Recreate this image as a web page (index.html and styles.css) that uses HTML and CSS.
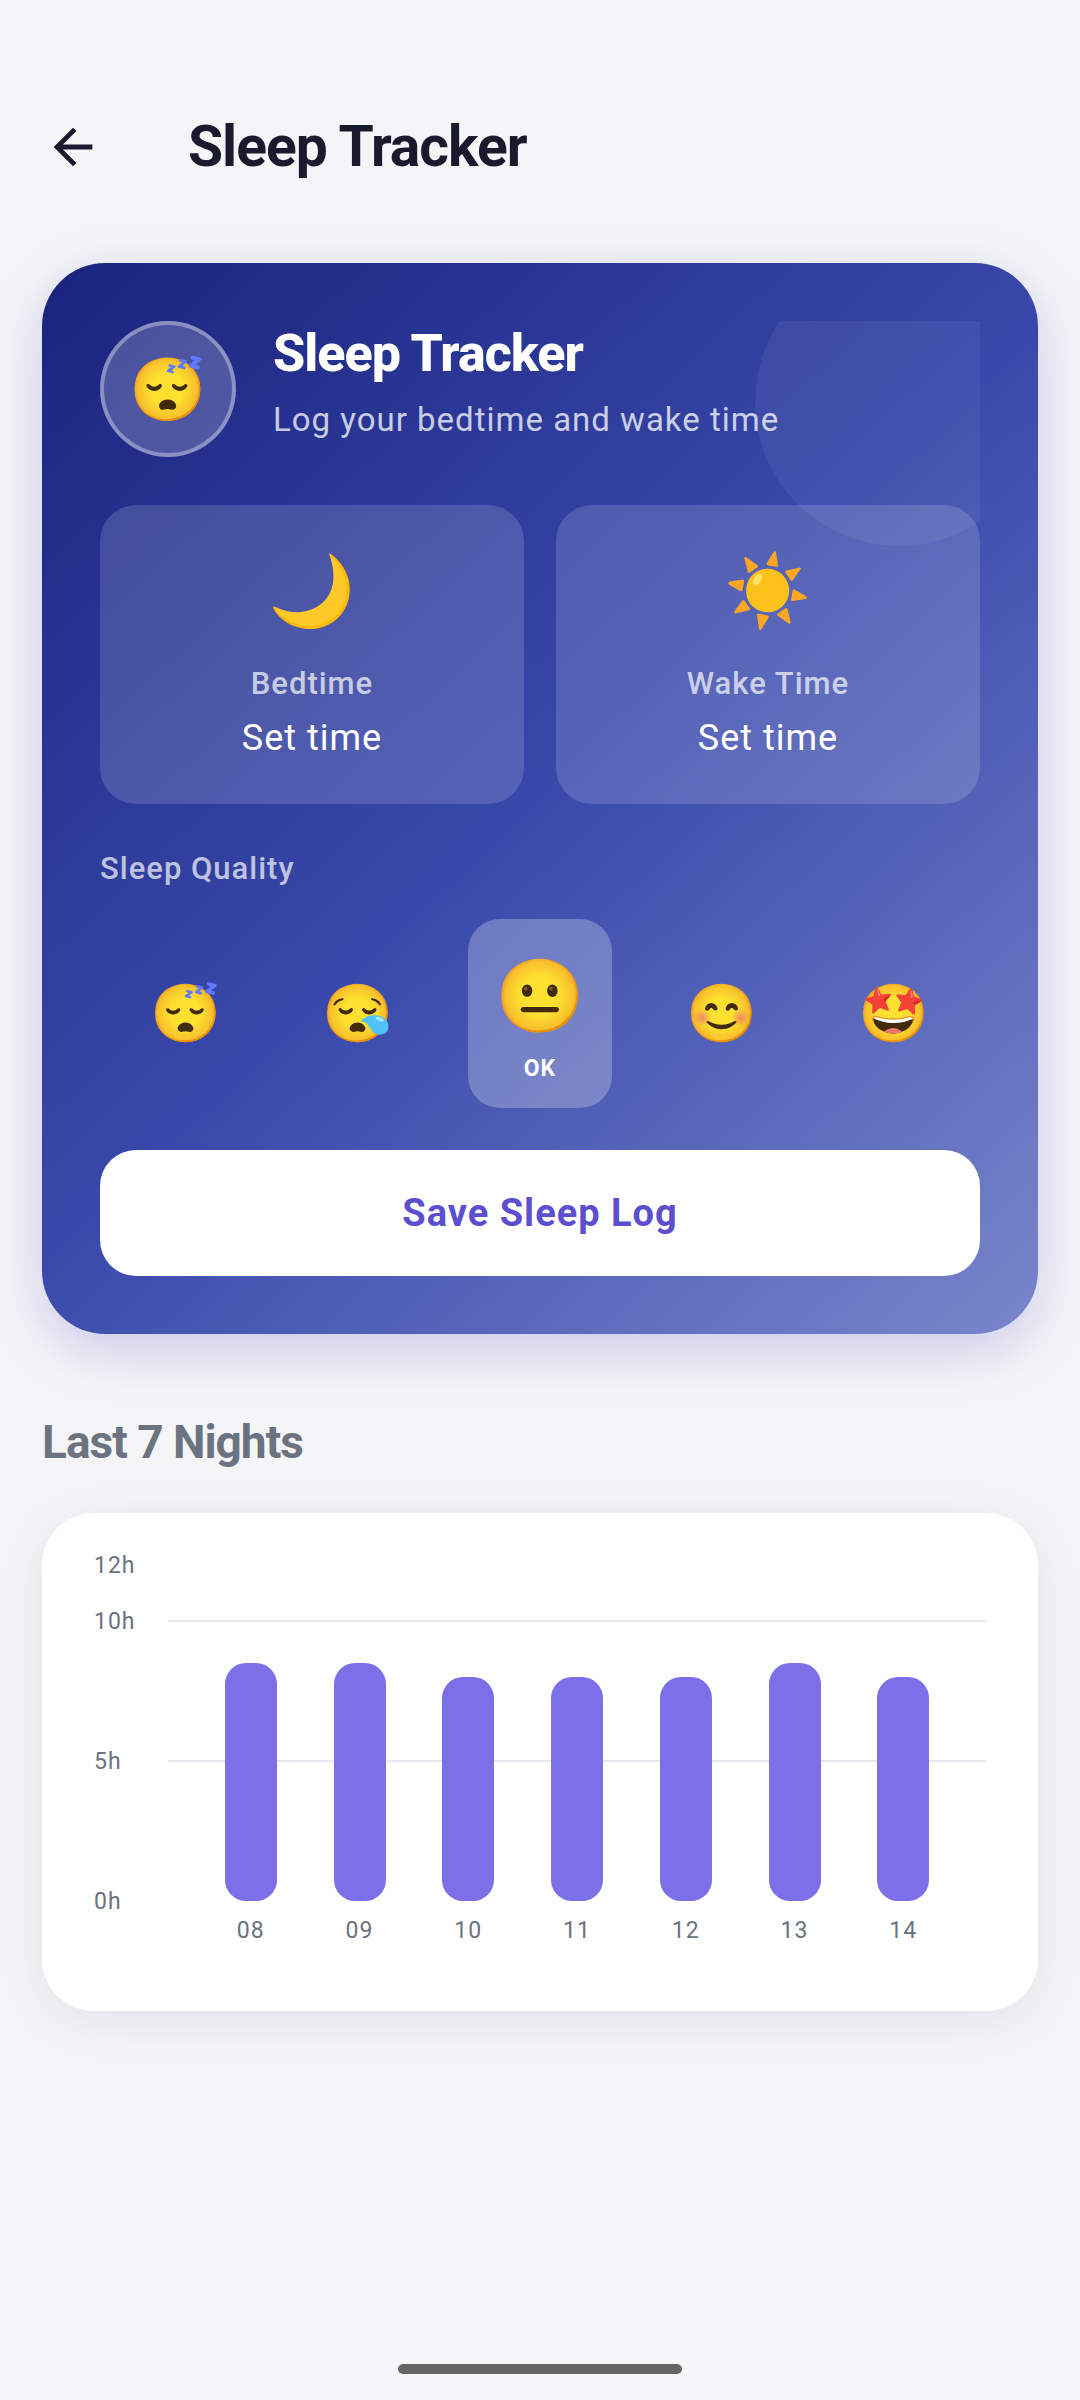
FILE: index.html
```
<!DOCTYPE html>
<html lang="en">
<head>
    <meta charset="UTF-8">
    <meta name="viewport" content="width=device-width, initial-scale=1.0">
    <title>Sleep Tracker</title>
    <link rel="stylesheet" href="styles.css">
</head>
<body>
    <header class="top-bar">
        <button class="back-button" type="button" aria-label="Back">
            <svg viewBox="0 0 24 24"><path d="M7.825 13L13.425 18.6L12 20L4 12L12 4L13.425 5.4L7.825 11H20V13Z" fill="currentColor"/></svg>
        </button>
        <h1 class="page-title">Sleep Tracker</h1>
    </header>

    <main class="page-container">
        <form class="tracker-card">
            <div class="tracker-content">
                <div class="tracker-header">
                    <span class="avatar">😴</span>
                    <div>
                        <h2 class="tracker-title">Sleep Tracker</h2>
                        <p class="tracker-subtitle">Log your bedtime and wake time</p>
                    </div>
                </div>

                <div class="time-row">
                    <button class="time-box" type="button">
                        <span class="time-icon">🌙</span>
                        <span class="small-label">Bedtime</span>
                        <span class="time-value">Set time</span>
                    </button>
                    <button class="time-box" type="button">
                        <span class="time-icon">☀️</span>
                        <span class="small-label">Wake Time</span>
                        <span class="time-value">Set time</span>
                    </button>
                </div>

                <fieldset class="quality">
                    <legend class="small-label">Sleep Quality</legend>
                    <div class="quality-options">
                        <label class="quality-option">
                            <input type="radio" name="quality" value="1" aria-label="Terrible">
                            <span class="quality-emoji">😴</span>
                        </label>
                        <label class="quality-option">
                            <input type="radio" name="quality" value="2" aria-label="Poor">
                            <span class="quality-emoji">😪</span>
                        </label>
                        <label class="quality-option selected">
                            <input type="radio" name="quality" value="3" checked>
                            <span class="quality-emoji">😐</span>
                            <span class="quality-name">OK</span>
                        </label>
                        <label class="quality-option">
                            <input type="radio" name="quality" value="4" aria-label="Good">
                            <span class="quality-emoji">😊</span>
                        </label>
                        <label class="quality-option">
                            <input type="radio" name="quality" value="5" aria-label="Great">
                            <span class="quality-emoji">🤩</span>
                        </label>
                    </div>
                </fieldset>

                <button class="save-button" type="button">Save Sleep Log</button>
            </div>
        </form>

        <h2 class="section-title">Last 7 Nights</h2>

        <section class="chart-card">
            <div class="chart-plot">
                <div class="chart-scale">
                    <div class="tick" style="--span: 2"><span>12h</span></div>
                    <div class="tick tick-line" style="--span: 5"><span>10h</span></div>
                    <div class="tick tick-line" style="--span: 5"><span>5h</span></div>
                    <div class="tick" style="--span: 0"><span>0h</span></div>
                </div>
                <div class="chart-bars">
                    <div class="bar" style="--hours: 8.5"></div>
                    <div class="bar" style="--hours: 8.5"></div>
                    <div class="bar" style="--hours: 8"></div>
                    <div class="bar" style="--hours: 8"></div>
                    <div class="bar" style="--hours: 8"></div>
                    <div class="bar" style="--hours: 8.5"></div>
                    <div class="bar" style="--hours: 8"></div>
                </div>
            </div>
            <div class="chart-days">
                <span>08</span>
                <span>09</span>
                <span>10</span>
                <span>11</span>
                <span>12</span>
                <span>13</span>
                <span>14</span>
            </div>
        </section>
    </main>

    <div class="home-indicator"></div>
</body>
</html>
```
FILE: styles.css
```
* {
    box-sizing: border-box;
}

body {
    font-family: Roboto, "Noto Color Emoji", sans-serif;
    margin: 0;
    background-color: #f5f5f8;
    color: #1a1a2e;
    display: flex;
    flex-direction: column;
    min-height: 100vh;
}

h1, h2, p, fieldset, legend {
    margin: 0;
    padding: 0;
}

button {
    font-family: inherit;
    border: none;
    cursor: pointer;
}

/* Top bar */
.top-bar {
    display: flex;
    align-items: center;
    gap: 66px;
    padding: 108px 42px 77px 42px;
}

.back-button {
    width: 80px;
    height: 78px;
    padding: 0 0 0 2px;
    background: none;
    color: #1a1a2e;
}

.back-button svg {
    display: block;
    width: 58px;
    height: 58px;
}

.page-title {
    font-size: 57px;
    line-height: 76px;
    font-weight: 700;
    letter-spacing: -1px;
}

.page-container {
    padding: 0 42px;
}

/* Tracker card */
.tracker-card {
    padding: 58px;
    border-radius: 63px;
    background: linear-gradient(137deg, #1a237e 0%, #3949ab 50%, #7986cb 100%);
    box-shadow: 0 16px 54px rgba(75, 75, 190, 0.25);
    color: white;
}

.tracker-content {
    position: relative;
    overflow: hidden;
}

/* Decorative circle in the corner */
.tracker-content::before {
    content: "";
    position: absolute;
    top: -63px;
    right: -63px;
    width: 288px;
    height: 288px;
    border-radius: 50%;
    background-color: rgba(255, 255, 255, 0.06);
}

.tracker-header {
    display: flex;
    gap: 37px;
    margin-bottom: 48px;
}

.avatar {
    display: flex;
    align-items: center;
    justify-content: center;
    width: 136px;
    height: 136px;
    border: 4px solid rgba(255, 255, 255, 0.35);
    border-radius: 50%;
    background-color: rgba(255, 255, 255, 0.2);
    font-size: 62px;
}

.tracker-title {
    font-size: 52px;
    line-height: 66px;
    font-weight: 800;
    letter-spacing: -1px;
}

.tracker-subtitle {
    margin-top: 9px;
    font-size: 33px;
    line-height: 48px;
    letter-spacing: 1px;
    color: rgba(255, 255, 255, 0.75);
}

.time-row {
    display: flex;
    gap: 32px;
    margin-bottom: 42px;
}

.time-box {
    position: relative;
    flex: 1;
    display: flex;
    flex-direction: column;
    align-items: center;
    padding: 42px;
    border-radius: 36px;
    background-color: rgba(255, 255, 255, 0.15);
    color: white;
}

.time-icon {
    font-size: 70px;
    line-height: 88px;
}

.small-label {
    font-size: 31px;
    line-height: 46px;
    font-weight: 500;
    letter-spacing: 1px;
    color: rgba(255, 255, 255, 0.7);
}

.time-box .small-label {
    margin-top: 26px;
}

.time-value {
    margin-top: 8px;
    font-size: 36px;
    line-height: 47px;
    letter-spacing: 1px;
}

/* Sleep quality */
.quality {
    min-width: 0;
    margin-bottom: 42px;
    border: none;
}

.quality-options {
    display: flex;
    align-items: center;
    justify-content: space-around;
    margin-top: 27px;
}

.quality-option {
    display: flex;
    flex-direction: column;
    align-items: center;
    padding: 26px;
    border-radius: 32px;
    cursor: pointer;
}

.quality-option input {
    position: absolute;
    opacity: 0;
}

.quality-emoji {
    display: flex;
    justify-content: center;
    width: 72px;
    font-size: 57px;
    line-height: 72px;
}

.selected {
    background-color: rgba(255, 255, 255, 0.25);
}

.selected .quality-emoji {
    width: 92px;
    font-size: 72px;
    line-height: 104px;
}

.quality-name {
    margin-top: 6px;
    font-size: 23px;
    line-height: 27px;
    font-weight: 700;
    letter-spacing: 1px;
}

.save-button {
    width: 100%;
    height: 126px;
    border-radius: 36px;
    background-color: white;
    color: #5b4fcf;
    font-size: 38px;
    font-weight: 700;
    letter-spacing: 1px;
}

/* Chart */
.section-title {
    margin: 78px 0 41px 0;
    font-size: 46px;
    line-height: 60px;
    font-weight: 700;
    letter-spacing: -1px;
    color: #6b7280;
}

.chart-card {
    padding: 52px;
    border-radius: 52px;
    background-color: white;
    box-shadow: 0 10px 52px rgba(26, 26, 46, 0.08);
    color: #6b7280;
    font-size: 23px;
    line-height: 30px;
    letter-spacing: 1px;
}

.chart-plot {
    display: grid;
    height: 336px;
}

.chart-scale, .chart-bars {
    grid-area: 1 / 1;
}

.chart-scale {
    display: flex;
    flex-direction: column;
}

.tick {
    display: flex;
    flex: var(--span) 0 0;
    min-height: 0;
}

.tick span {
    width: 74px;
    height: 30px;
    margin-top: -14px;
}

.tick-line::after {
    content: "";
    flex: 1;
    height: 2px;
    margin-top: -1px;
    background-color: #e8e8f0;
}

.chart-bars, .chart-days {
    display: flex;
    justify-content: space-evenly;
    margin-left: 74px;
}

.chart-bars {
    align-items: flex-end;
}

.bar {
    width: 52px;
    height: calc(100% * var(--hours) / 12);
    border-radius: 21px;
    background-color: #7c6fe8;
}

.chart-days {
    height: 58px;
    padding-top: 15px;
}

.chart-days span {
    width: 52px;
    text-align: center;
}

.home-indicator {
    width: 284px;
    height: 10px;
    margin: auto auto 26px auto;
    border-radius: 5px;
    background-color: #646464;
}
```
